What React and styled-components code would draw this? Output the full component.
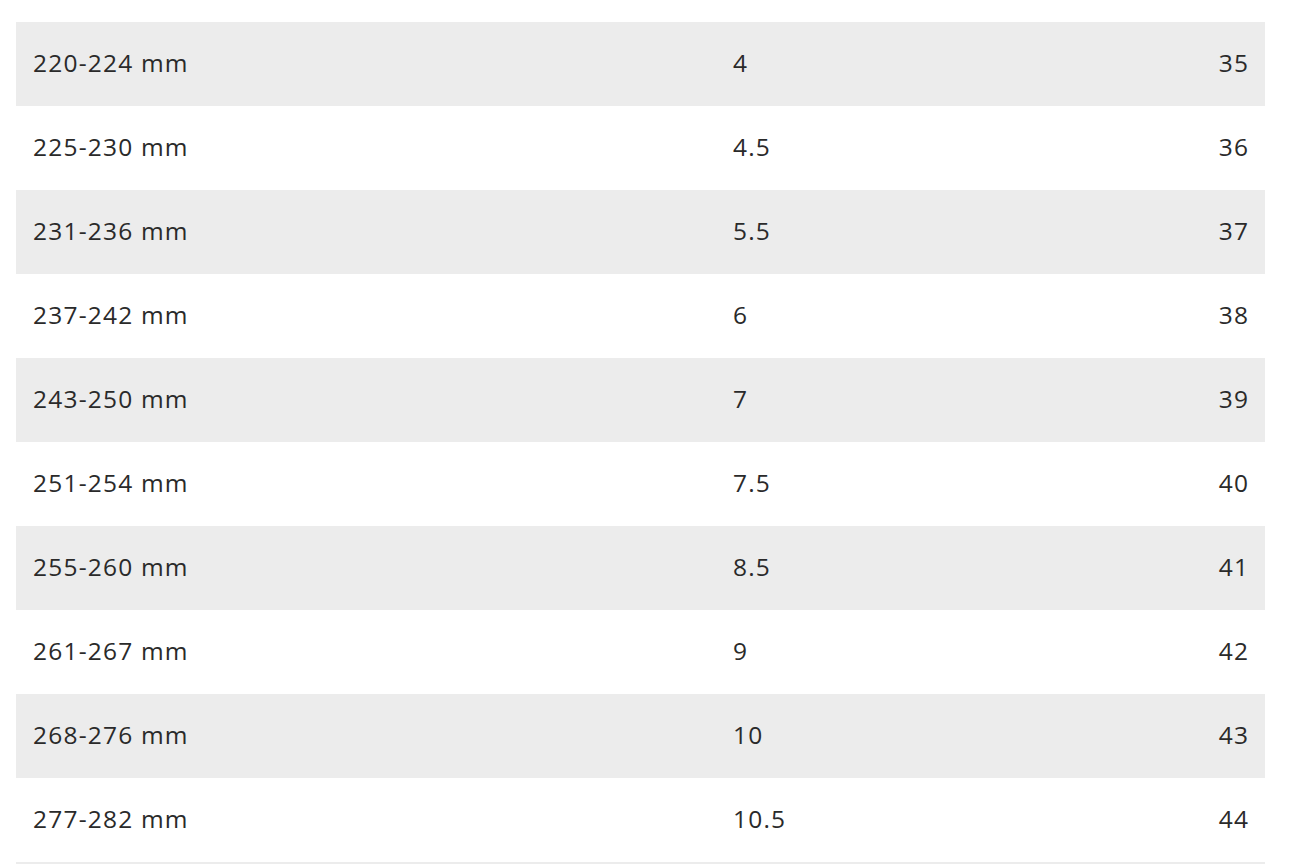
import React from "react";
import styled, { createGlobalStyle } from "styled-components";

const Global = createGlobalStyle`
  html, body { margin: 0; padding: 0; background: #ffffff; }
  body { overflow: hidden; }
`;

const Page = styled.div`
  padding: 22px 25px 0 16px;
  height: 864px;
  box-sizing: border-box;
  overflow: hidden;
  font-family: "Open Sans", "Liberation Sans", sans-serif;
`;

const Table = styled.div`
  display: flex;
  flex-direction: column;
  width: 1249px;
`;

const Row = styled.div`
  display: grid;
  grid-template-columns: 700px 1fr auto;
  align-items: center;
  height: 84px;
  padding: 0 17px 2px;
  box-sizing: border-box;
  background: ${(p) => (p.$shaded ? "#ececec" : "#ffffff")};
`;

const Cell = styled.div`
  font-size: 24.5px;
  font-weight: 500;
  letter-spacing: 1.2px;
  color: #2a2a2a;
  text-align: ${(p) => (p.$right ? "right" : "left")};
  line-height: 1;
  margin-right: ${(p) => (p.$right ? "-1.2px" : "0")};
`;

const rows = [
  ["220-224 mm", "4", "35"],
  ["225-230 mm", "4.5", "36"],
  ["231-236 mm", "5.5", "37"],
  ["237-242 mm", "6", "38"],
  ["243-250 mm", "7", "39"],
  ["251-254 mm", "7.5", "40"],
  ["255-260 mm", "8.5", "41"],
  ["261-267 mm", "9", "42"],
  ["268-276 mm", "10", "43"],
  ["277-282 mm", "10.5", "44"],
  ["", "", ""],
];

export default function App() {
  return (
    <>
      <Global />
      <Page>
        <Table>
          {rows.map((r, i) => (
            <Row key={i} $shaded={i % 2 === 0}>
              <Cell>{r[0]}</Cell>
              <Cell>{r[1]}</Cell>
              <Cell $right>{r[2]}</Cell>
            </Row>
          ))}
        </Table>
      </Page>
    </>
  );
}
